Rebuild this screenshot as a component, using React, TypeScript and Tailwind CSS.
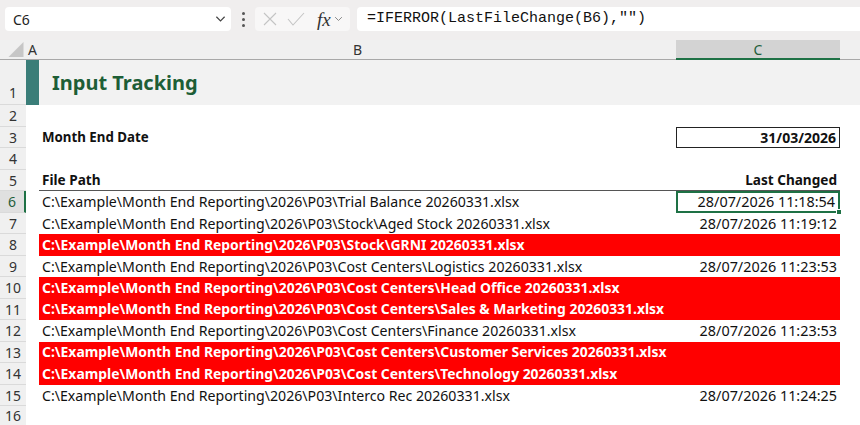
import React from "react";

const sans = "font-['Noto_Sans','Liberation_Sans',sans-serif]";

type Row = { n: number; h: string; kind: string; b?: string; c?: string };

const rows: Row[] = [
  { n: 2, h: "h-[22px]", kind: "blank" },
  { n: 3, h: "h-[21px]", kind: "date" },
  { n: 4, h: "h-[22px]", kind: "blank" },
  { n: 5, h: "h-[21px]", kind: "head" },
  { n: 6, h: "h-[22px]", kind: "ok", b: "C:\\Example\\Month End Reporting\\2026\\P03\\Trial Balance 20260331.xlsx", c: "28/07/2026 11:18:54" },
  { n: 7, h: "h-[21px]", kind: "ok", b: "C:\\Example\\Month End Reporting\\2026\\P03\\Stock\\Aged Stock 20260331.xlsx", c: "28/07/2026 11:19:12" },
  { n: 8, h: "h-[22px]", kind: "bad", b: "C:\\Example\\Month End Reporting\\2026\\P03\\Stock\\GRNI 20260331.xlsx" },
  { n: 9, h: "h-[21px]", kind: "ok", b: "C:\\Example\\Month End Reporting\\2026\\P03\\Cost Centers\\Logistics 20260331.xlsx", c: "28/07/2026 11:23:53" },
  { n: 10, h: "h-[22px]", kind: "bad", b: "C:\\Example\\Month End Reporting\\2026\\P03\\Cost Centers\\Head Office 20260331.xlsx" },
  { n: 11, h: "h-[21px]", kind: "bad", b: "C:\\Example\\Month End Reporting\\2026\\P03\\Cost Centers\\Sales & Marketing 20260331.xlsx" },
  { n: 12, h: "h-[22px]", kind: "ok", b: "C:\\Example\\Month End Reporting\\2026\\P03\\Cost Centers\\Finance 20260331.xlsx", c: "28/07/2026 11:23:53" },
  { n: 13, h: "h-[21px]", kind: "bad", b: "C:\\Example\\Month End Reporting\\2026\\P03\\Cost Centers\\Customer Services 20260331.xlsx" },
  { n: 14, h: "h-[22px]", kind: "bad", b: "C:\\Example\\Month End Reporting\\2026\\P03\\Cost Centers\\Technology 20260331.xlsx" },
  { n: 15, h: "h-[21px]", kind: "ok", b: "C:\\Example\\Month End Reporting\\2026\\P03\\Interco Rec 20260331.xlsx", c: "28/07/2026 11:24:25" },
  { n: 16, h: "h-[20px]", kind: "blank" },
];

function Chevron({ className }: { className?: string }) {
  return (
    <svg viewBox="0 0 12 8" className={className} fill="none" stroke="currentColor" strokeWidth="1.3">
      <path d="M1.5 1.5 L6 6 L10.5 1.5" />
    </svg>
  );
}

function Toolbar() {
  return (
    <div className="h-[40px] bg-[#f0eeee] flex items-center pl-[5px] pb-[4px] pt-[2px]">
      <div className="w-[226px] h-[24px] bg-white rounded-[4px] flex items-center pl-[8px] pr-[5px]">
        <span className={`${sans} text-[14px] text-[#222] flex-1`}>C6</span>
        <Chevron className="w-[11px] h-[8px] text-[#444]" />
      </div>
      <div className="w-[24px] flex flex-col items-center gap-[3px]">
        <div className="w-[3px] h-[3px] rounded-full bg-[#555]" />
        <div className="w-[3px] h-[3px] rounded-full bg-[#555]" />
        <div className="w-[3px] h-[3px] rounded-full bg-[#555]" />
      </div>
      <div className="w-[95px] h-[24px] bg-[#f8f7f7] rounded-[4px] flex items-center pl-[7px] pr-[3px]">
        <svg viewBox="0 0 16 16" className="w-[16px] h-[16px] text-[#c4c4c4]" fill="none" stroke="currentColor" strokeWidth="1.1">
          <path d="M2 2 L14 14 M14 2 L2 14" />
        </svg>
        <svg viewBox="0 0 18 16" className="w-[18px] h-[16px] ml-[9px] text-[#c4c4c4]" fill="none" stroke="currentColor" strokeWidth="1.1">
          <path d="M1 8 L6 14 L17 2" />
        </svg>
        <span className="ml-[12px] font-['Liberation_Serif',serif] italic text-[19px] text-[#333] leading-none">fx</span>
        <Chevron className="ml-[3px] w-[9px] h-[6px] text-[#888]" />
      </div>
      <div className="ml-[7px] flex-1 h-[24px] bg-white rounded-l-[4px] flex items-center pl-[10px]">
        <span className="font-['Liberation_Mono',monospace] text-[15px] text-[#111] whitespace-pre">=IFERROR(LastFileChange(B6),"")</span>
      </div>
    </div>
  );
}

function ColHeaders() {
  return (
    <div className={`${sans} h-[20px] flex bg-[#f0f0f0] border-b border-[#a8a8a8] text-[14px] text-[#333]`}>
      <div className="w-[26px] flex items-end justify-end pr-[2px] pb-[2px]">
        <svg viewBox="0 0 16 16" className="w-[16px] h-[15px]">
          <path d="M16 0 L16 16 L0 16 Z" fill="#c6c6c6" />
        </svg>
      </div>
      <div className="w-[13px] flex items-center justify-center">A</div>
      <div className="w-[637px] flex items-center justify-center">B</div>
      <div className="w-[164px] flex items-center justify-center bg-[#d3d3d3] border-b-2 border-[#1e7145] text-[#1e5e3a] mb-[-1px]">C</div>
      <div className="flex-1" />
    </div>
  );
}

function RowHeader({ n, selected, tall }: { n: number; selected?: boolean; tall?: boolean }) {
  return (
    <div
      className={`w-[26px] shrink-0 flex justify-center border-b border-[#dadada] text-[14px] ${tall ? "items-end pb-[1px]" : "items-center"} ${
        selected ? "bg-[#e0e0e0] border-r-2 border-r-[#1e7145] text-[#1e5e3a]" : "bg-[#f0f0f0] text-[#333]"
      }`}
    >
      {n}
    </div>
  );
}

export default function App() {
  return (
    <div className={`w-[860px] h-[425px] bg-white overflow-hidden ${sans}`}>
      <Toolbar />
      <ColHeaders />
      <div className="text-[14px]">
        <div className="h-[45px] flex">
          <RowHeader n={1} tall />
          <div className="w-[13px] bg-[#3a7d78]" />
          <div className="flex-1 bg-[#f2f2f2] flex items-center pl-[13px]">
            <span className="text-[20px] font-bold text-[#1d5e36]">Input Tracking</span>
          </div>
        </div>
        {rows.map((r) => (
          <div key={r.n} className={`${r.h} flex`}>
            <RowHeader n={r.n} selected={r.n === 6} />
            <div className="w-[13px]" />
            {r.kind === "blank" && <div className="flex-1" />}
            {r.kind === "date" && (
              <>
                <div className="w-[637px] flex items-center pl-[3px] font-bold text-[13.3px] text-[#111]">Month End Date</div>
                <div className="w-[164px] border border-[#222] flex items-center justify-end pr-[3px] font-bold text-[#111]">31/03/2026</div>
              </>
            )}
            {r.kind === "head" && (
              <div className="w-[801px] flex items-center justify-between px-[3px] font-bold text-[13.6px] text-[#111] border-b border-[#555]">
                <span>File Path</span>
                <span>Last Changed</span>
              </div>
            )}
            {r.kind === "ok" && (
              <>
                <div className="w-[637px] flex items-center pl-[3px] text-[14.15px] text-[#111] whitespace-nowrap">{r.b}</div>
                <div
                  className={`relative w-[164px] flex items-center justify-end pr-[3px] text-[14.4px] text-[#111] ${
                    r.n === 6 ? "border-2 border-[#1e7145]" : ""
                  }`}
                >
                  {r.c}
                  {r.n === 6 && <div className="absolute right-[-4px] bottom-[-4px] w-[6px] h-[6px] bg-[#1e7145] border border-white" />}
                </div>
              </>
            )}
            {r.kind === "bad" && (
              <div className="w-[801px] bg-[#ff0000] flex items-center pl-[3px] font-bold text-[13.9px] text-white whitespace-nowrap">{r.b}</div>
            )}
          </div>
        ))}
      </div>
    </div>
  );
}
